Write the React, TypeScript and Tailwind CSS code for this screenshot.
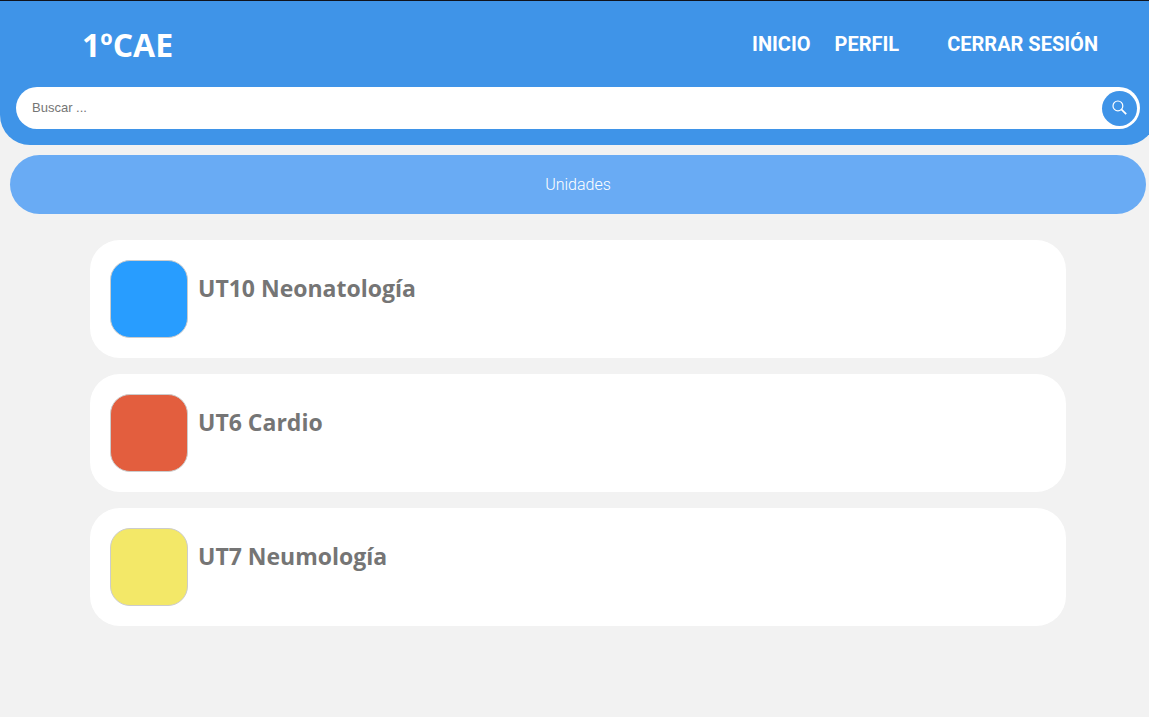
import React from "react";

type Unit = { name: string; swatch: string };

const units: Unit[] = [
  { name: "UT10 Neonatología", swatch: "bg-[#289dff]" },
  { name: "UT6 Cardio", swatch: "bg-[#e35e3e]" },
  { name: "UT7 Neumología", swatch: "bg-[#f3e868]" },
];

function SearchIcon() {
  return (
    <svg viewBox="0 0 16 16" className="size-4" fill="none" stroke="currentColor" strokeWidth="1.2" aria-hidden="true">
      <circle cx="5.9" cy="5.9" r="4.9" />
      <path d="M9.4 9.4 14.2 14.2" strokeWidth="1.7" />
    </svg>
  );
}

function Header() {
  return (
    <header className="rounded-b-[30px] bg-[#3f94e8] px-4 pb-4 text-white">
      <div className="flex h-[86px] items-center justify-between pt-[2px] pr-[42px] pl-[66px]">
        <h1 className="font-['Open_Sans',sans-serif] text-[32px] leading-10 font-bold">1ºCAE</h1>
        <nav className="flex pb-[2px] font-['Roboto',sans-serif] text-xl leading-6 font-bold">
          <a href="#inicio" className="mr-6">INICIO</a>
          <a href="#perfil" className="mr-12">PERFIL</a>
          <a href="#salir">CERRAR SESIÓN</a>
        </nav>
      </div>
      <form
        className="flex h-[42px] items-center rounded-full bg-white pr-[3px] pl-4"
        onSubmit={(event) => event.preventDefault()}
      >
        <input
          type="text"
          aria-label="Buscar"
          placeholder="Buscar ..."
          className="min-w-0 flex-1 bg-transparent font-['Liberation_Sans',sans-serif] text-[13px] text-black outline-none placeholder:text-[#757575]"
        />
        <button
          type="submit"
          aria-label="Buscar"
          className="flex size-[35px] items-center justify-center rounded-full bg-[#3f94e8] text-white"
        >
          <SearchIcon />
        </button>
      </form>
    </header>
  );
}

function UnitCard({ name, swatch }: Unit) {
  return (
    <li className="flex gap-[10px] rounded-[30px] bg-white p-5">
      <div className={`size-[78px] shrink-0 rounded-[20px] border border-[#ccc] ${swatch}`} />
      <h2 className="pt-3 font-['Open_Sans',sans-serif] text-[23px] leading-8 font-bold text-[#757575]">{name}</h2>
    </li>
  );
}

export default function App() {
  return (
    <div className="min-h-screen overflow-x-hidden border-t border-[#10131c] bg-[#f2f2f2]">
      <div className="-mr-[7px]">
        <Header />
        <div className="mx-[10px] mt-[10px] flex h-[59px] items-center justify-center rounded-[30px] bg-[#69abf4] font-['Roboto',sans-serif] text-base font-light text-white">
          Unidades
        </div>
        <main className="mt-[26px] px-[90px] pb-10">
          <ul className="flex flex-col gap-4">
            {units.map((unit) => (
              <UnitCard key={unit.name} {...unit} />
            ))}
          </ul>
        </main>
      </div>
    </div>
  );
}
